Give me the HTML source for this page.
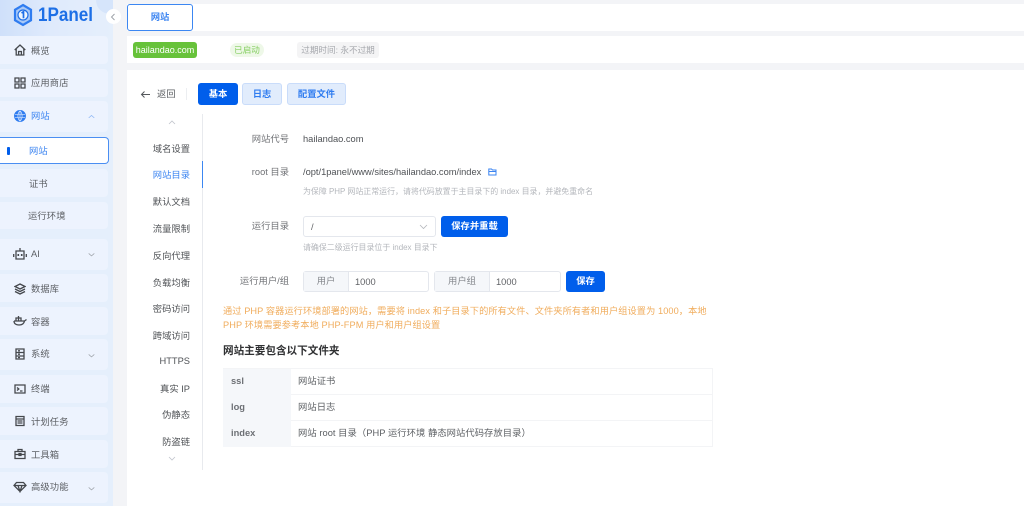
<!DOCTYPE html>
<html lang="zh"><head><meta charset="utf-8"><title>1Panel</title>
<style>
html,body{margin:0;padding:0}
body{width:1024px;height:506px;overflow:hidden;position:relative;background:#f3f4f7;font-family:"Liberation Sans","Noto Sans CJK SC",sans-serif;font-size:9.3px;color:#5f6266}
div,span,svg{position:absolute;box-sizing:border-box}
#w{left:0;top:0;width:1024px;height:506px;overflow:hidden;filter:blur(.35px)}
.t{white-space:nowrap;line-height:14px;height:14px}
.side{left:0;top:0;width:113px;height:506px;background:#e5effc}
.it{left:0;width:108px;background:#edf3fe;border-radius:0 4px 4px 0}
.n{left:31px;color:#5d6065;font-size:9.3px;white-space:nowrap;line-height:14px;height:14px;letter-spacing:.1px}
.ic{left:14px;width:12px;height:12px;fill:none;stroke:#45484d;stroke-width:1.3}
.ch{left:88px;width:7px;height:5px;fill:none;stroke:#9da2a9;stroke-width:1}
.card{background:#fff;left:127px;width:897px}
.m{color:#4f5256;right:834px;text-align:right}
.lbl{right:735px;text-align:right;color:#707276}
.btn{background:#005eeb;color:#fff;border-radius:3px;text-align:center;font-weight:bold;font-size:9.3px}
.tab{background:#e1ecfc;color:#2f7cf0;border:1px solid #c9dcfa;border-radius:3px;text-align:center;top:83px;height:22px;line-height:20px;font-weight:bold}
.box{border:1px solid #e4e7ed;border-radius:3px;background:#fff;height:21px}
.pre{background:#f5f7fa;color:#85888d;text-align:center;line-height:19px;top:0;left:0;height:19px;border-right:1px solid #e4e7ed}
.row{left:223px;width:490px;height:26px;border-bottom:1px solid #f3f4f6;border-right:1px solid #f3f4f6}
.k{left:0;top:0;width:68px;height:26px;background:#f5f7fa;color:#6d7075;font-weight:bold;line-height:25px;padding-left:8px}
.v{left:75px;top:0;line-height:25px;color:#5d6064;white-space:nowrap;letter-spacing:.05px}
</style></head><body>
<div id="w">
<div class="side">
<div style="left:0;top:0;width:113px;height:36px;background:linear-gradient(90deg,#cfe0fa 0%,#dfeafc 45%,#e5effc 100%)"></div>
<div style="left:96px;top:0;width:17px;height:14px;background:#d6e5fb;border-radius:0 0 0 14px"></div>

<svg style="left:13px;top:3px;width:20px;height:24px" viewBox="0 0 20 24"><path d="M10 2 18 6.8V17.2L10 22 2 17.2V6.8Z" fill="#a9c9f7" stroke="#2f7cf0" stroke-width="2.2"/><circle cx="10" cy="12" r="5" fill="#eef5fe" stroke="#1f6fe8" stroke-width="1.2"/><path d="M8.5 10 10.5 8.8V15.2" fill="none" stroke="#1f6fe8" stroke-width="1.7"/></svg>
<div class="t" style="left:38px;top:6px;height:18px;line-height:18px;font-size:19.5px;font-weight:bold;color:#1d6fe6;transform:scaleX(.875);transform-origin:0 50%">1Panel</div>

<div class="it" style="top:36px;height:28px"></div>
<svg class="ic" style="top:44px" viewBox="0 0 12 12"><path d="M.7 6 6 1 11.3 6M2.2 5V11H9.8V5M4.6 11V7.5H7.4V11"/></svg>
<div class="n" style="top:44px">概览</div>

<div class="it" style="top:69px;height:28px"></div>
<svg class="ic" style="top:77px" viewBox="0 0 12 12"><path d="M1 1H5V5H1ZM7 1H11V5H7ZM1 7H5V11H1ZM7 7H11V11H7Z"/></svg>
<div class="n" style="top:76px">应用商店</div>

<div class="it" style="top:101px;height:31px"></div>
<svg class="ic" style="top:110px;stroke:#2f7cf0" viewBox="0 0 12 12"><circle cx="6" cy="6" r="5.3" fill="#2f7cf0"/><path stroke="#d8e6fc" stroke-width=".7" d="M1 4.3H11M1 7.7H11M6 .8V11.2M6 .8C3.2 3.5 3.2 8.5 6 11.2M6 .8C8.8 3.5 8.8 8.5 6 11.2"/></svg>
<div class="n" style="top:109px;color:#3b84f1">网站</div>
<svg class="ch" style="top:114px;stroke:#8ab4f5" viewBox="0 0 10 6"><path d="M1 5 5 1.5 9 5"/></svg>

<div style="left:0;top:137px;width:109px;height:27px;background:#fff;border:1px solid #4a8ef2;border-left:0;border-radius:0 4px 4px 0"></div>
<div style="left:7px;top:147px;width:3px;height:8px;background:#005eeb;border-radius:1px"></div>
<div class="n" style="left:29px;top:144px;color:#3b84f1">网站</div>

<div class="it" style="top:169px;height:28px"></div>
<div class="n" style="left:29px;top:177px">证书</div>

<div class="it" style="top:202px;height:27px"></div>
<div class="n" style="left:28px;top:209px">运行环境</div>

<div class="it" style="top:239px;height:31px"></div>
<svg class="ic" style="top:248px;left:13px;width:14px;height:13px" viewBox="0 0 14 13"><path d="M7 0V3M3 3H11V11H3ZM.7 6V9M13.3 6V9"/><path stroke-width="1.6" d="M5.3 6V8M8.7 6V8"/></svg>
<div class="n" style="top:247px">AI</div>
<svg class="ch" style="top:252px" viewBox="0 0 10 6"><path d="M1 1.5 5 5 9 1.5"/></svg>

<div class="it" style="top:274px;height:28px"></div>
<svg class="ic" style="top:283px" viewBox="0 0 12 12"><path d="M6 1 11 3.5 6 6 1 3.5ZM1 6 6 8.5 11 6M1 8.5 6 11 11 8.5"/></svg>
<div class="n" style="top:282px">数据库</div>

<div class="it" style="top:307px;height:28px"></div>
<svg class="ic" style="top:315px;left:13px;width:14px" viewBox="0 0 14 12"><path d="M1 6H11.5L13.5 4.5M1 6C1 9 3.5 10 6 10 9 10 11 8.5 11.5 6M3 6V3H8V6M5.5 1V6"/></svg>
<div class="n" style="top:315px">容器</div>

<div class="it" style="top:339px;height:31px"></div>
<svg class="ic" style="top:348px" viewBox="0 0 12 12"><path d="M2 1H10V11H2ZM2 4.5H10M2 8H10M4 2.8H6M4 6.2H6M4 9.5H6"/></svg>
<div class="n" style="top:347px">系统</div>
<svg class="ch" style="top:353px" viewBox="0 0 10 6"><path d="M1 1.5 5 5 9 1.5"/></svg>

<div class="it" style="top:375px;height:28px"></div>
<svg class="ic" style="top:383px" viewBox="0 0 12 12"><path d="M1 2H11V10H1ZM3 4.5 4.8 6 3 7.5M6 8H8.5"/></svg>
<div class="n" style="top:382px">终端</div>

<div class="it" style="top:407px;height:28px"></div>
<svg class="ic" style="top:415px" viewBox="0 0 12 12"><path d="M2 1.5H10V10.5H2ZM2 4H10M3.5 6H8.5M3.5 8H8.5"/></svg>
<div class="n" style="top:415px">计划任务</div>

<div class="it" style="top:440px;height:28px"></div>
<svg class="ic" style="top:448px" viewBox="0 0 12 12"><path d="M1 3.5H11V10.5H1ZM4 3.5V1.5H8V3.5M1 6.5H11M5 5.5H7V7.5H5Z"/></svg>
<div class="n" style="top:448px">工具箱</div>

<div class="it" style="top:472px;height:31px"></div>
<svg class="ic" style="top:481px;left:13px;width:14px" viewBox="0 0 14 12"><path d="M3.5 1.5H10.5L13 4.5 7 10.5 1 4.5ZM1 4.5H13M5 4.5 7 10.5 9 4.5"/></svg>
<div class="n" style="top:480px">高级功能</div>
<svg class="ch" style="top:486px" viewBox="0 0 10 6"><path d="M1 1.5 5 5 9 1.5"/></svg>
</div>

<div style="left:106px;top:9px;width:15px;height:15px;border-radius:50%;background:#fff"></div>
<svg style="left:110px;top:13px;width:6px;height:8px;fill:none;stroke:#9a9ea5;stroke-width:.9" viewBox="0 0 6 8"><path d="M4.5 1 1.5 4 4.5 7"/></svg>

<div class="card" style="top:4px;height:27px"></div>
<div class="t" style="left:127px;top:4px;width:66px;height:27px;line-height:25px;background:#fff;border:1px solid #3c87f2;border-radius:3px;text-align:center;color:#3b84f1;font-weight:bold">网站</div>

<div class="card" style="top:36px;height:27px"></div>
<div class="t" style="left:133px;top:42px;width:64px;height:16px;line-height:16px;background:#67c23a;border-radius:3px;color:#fff;text-align:center;font-size:9px">hailandao.com</div>
<div class="t" style="left:230px;top:43px;width:34px;height:14px;background:#eef8e8;border-radius:7px;color:#85ce61;text-align:center;font-size:8.6px">已启动</div>
<div class="t" style="left:297px;top:42px;width:82px;height:16px;line-height:16px;background:#f4f4f5;border-radius:3px;color:#a6a8ad;text-align:center;font-size:8.6px">过期时间: 永不过期</div>

<div class="card" style="top:70px;height:436px"></div>

<svg style="left:140px;top:90px;width:11px;height:9px;fill:none;stroke:#55585c;stroke-width:1" viewBox="0 0 11 9"><path d="M10 4.5H1.5M4.5 1.5 1.5 4.5 4.5 7.5"/></svg>
<div class="t" style="left:157px;top:87px;color:#5d6064">返回</div>
<div style="left:186px;top:88px;width:1px;height:12px;background:#eceef1"></div>
<div class="t btn" style="left:198px;top:83px;width:40px;height:22px;line-height:22px">基本</div>
<div class="t tab" style="left:242px;width:40px">日志</div>
<div class="t tab" style="left:287px;width:59px">配置文件</div>

<div style="left:202px;top:114px;width:1px;height:356px;background:#e8eaee"></div>
<div style="left:202px;top:161px;width:1px;height:27px;background:#3c87f2"></div>
<svg style="left:168px;top:120px;width:8px;height:5px;fill:none;stroke:#c0c4cc;stroke-width:.8" viewBox="0 0 8 5"><path d="M1 4 4 1 7 4"/></svg>
<svg style="left:168px;top:456px;width:8px;height:5px;fill:none;stroke:#c0c4cc;stroke-width:.8" viewBox="0 0 8 5"><path d="M1 1 4 4 7 1"/></svg>

<div class="t m" style="top:142px">域名设置</div>
<div class="t m" style="top:168px;color:#3b84f1">网站目录</div>
<div class="t m" style="top:195px">默认文档</div>
<div class="t m" style="top:222px">流量限制</div>
<div class="t m" style="top:249px">反向代理</div>
<div class="t m" style="top:276px">负载均衡</div>
<div class="t m" style="top:302px">密码访问</div>
<div class="t m" style="top:329px">跨域访问</div>
<div class="t m" style="top:354px">HTTPS</div>
<div class="t m" style="top:382px">真实 IP</div>
<div class="t m" style="top:408px">伪静态</div>
<div class="t m" style="top:435px">防盗链</div>

<div class="t lbl" style="top:132px">网站代号</div>
<div class="t" style="left:303px;top:132px;color:#4f5256">hailandao.com</div>
<div class="t lbl" style="top:165px">root 目录</div>
<div class="t" style="left:303px;top:165px;color:#4f5256">/opt/1panel/www/sites/hailandao.com/index</div>
<svg style="left:488px;top:168px;width:9px;height:8px;fill:none;stroke:#3b84f1;stroke-width:1" viewBox="0 0 9 8"><path d="M.8 7V1H3.5L4.5 2H8V7ZM.8 3.5H8"/></svg>
<div class="t" style="left:303px;top:185px;font-size:7.95px;color:#b4b7bc">为保障 PHP 网站正常运行，请将代码放置于主目录下的 index 目录，并避免重命名</div>

<div class="t lbl" style="top:219px">运行目录</div>
<div class="box" style="left:303px;top:216px;width:133px">
<div class="t" style="left:7px;top:3px;color:#606266">/</div>
<svg style="left:115px;top:7px;width:9px;height:6px;fill:none;stroke:#b4b7bc;stroke-width:.8" viewBox="0 0 9 6"><path d="M1 1 4.5 4.5 8 1"/></svg>
</div>
<div class="t btn" style="left:441px;top:216px;width:67px;height:21px;line-height:21px">保存并重载</div>
<div class="t" style="left:303px;top:241px;font-size:7.95px;color:#b4b7bc">请确保二级运行目录位于 index 目录下</div>

<div class="t lbl" style="top:274px">运行用户/组</div>
<div class="box" style="left:303px;top:271px;width:126px"><div class="pre" style="width:45px">用户</div><div class="t" style="left:51px;top:3px;color:#606266">1000</div></div>
<div class="box" style="left:434px;top:271px;width:127px"><div class="pre" style="width:55px">用户组</div><div class="t" style="left:61px;top:3px;color:#606266">1000</div></div>
<div class="t btn" style="left:566px;top:271px;width:39px;height:21px;line-height:21px">保存</div>

<div class="t" style="left:223px;top:304px;color:#f0ac5c;font-size:9.2px;letter-spacing:.09px">通过 PHP 容器运行环境部署的网站，需要将 index 和子目录下的所有文件、文件夹所有者和用户组设置为 1000，本地</div>
<div class="t" style="left:223px;top:318px;color:#f0ac5c;font-size:9.2px;letter-spacing:.09px">PHP 环境需要参考本地 PHP-FPM 用户和用户组设置</div>
<div class="t" style="left:223px;top:344px;color:#303133;font-weight:bold;font-size:10.6px">网站主要包含以下文件夹</div>

<div style="left:223px;top:368px;width:490px;height:1px;background:#f3f4f6"></div>
<div class="row" style="top:369px"><div class="k">ssl</div><div class="v">网站证书</div></div>
<div class="row" style="top:395px"><div class="k">log</div><div class="v">网站日志</div></div>
<div class="row" style="top:421px"><div class="k">index</div><div class="v">网站 root 目录（PHP 运行环境 静态网站代码存放目录）</div></div>
</div>
</body></html>
